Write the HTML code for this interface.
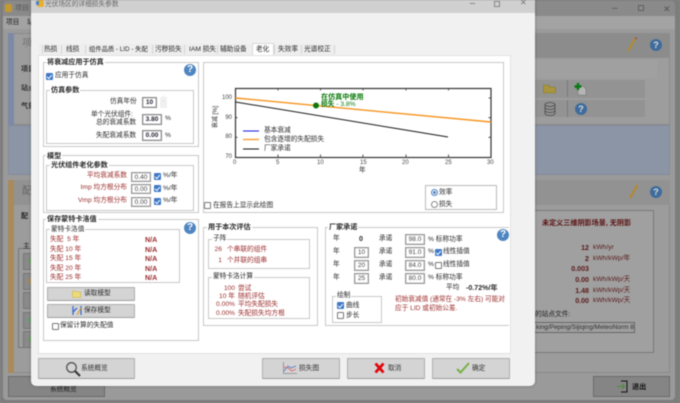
<!DOCTYPE html>
<html><head><meta charset="utf-8">
<style>
html,body{margin:0;padding:0;width:680px;height:403px;overflow:hidden;background:#8a8a8a}
body{font-family:"Liberation Sans","Noto Sans CJK SC",sans-serif;font-size:6.7px;color:#2a2a2a;position:relative}
#w{position:absolute;left:0;top:0;width:680px;height:403px;overflow:hidden;filter:blur(.5px)}
div,span,svg{position:absolute;box-sizing:border-box}
.t{white-space:nowrap;line-height:10px;margin-top:-5px}
.r{white-space:nowrap;line-height:10px;margin-top:-5px;text-align:right}
.b{font-weight:bold;font-size:7.1px}
.red{color:#9c2c2c}
.grp{border:1px solid #c8c8c8;background:transparent}
.lab{background:#fff;padding:0 1px;white-space:nowrap;line-height:10px;margin-top:-5px}
.in{background:#fff;border:1px solid #9a9a9a;box-shadow:inset 0 0 0 .5px #bbb;line-height:9px;font-size:6.5px;text-align:center;color:#444;white-space:nowrap}
.in.bd{font-weight:bold;color:#223;border-width:1.5px;border-color:#8a8a8a}
.cb{width:7px;height:7px;border:1px solid #777;background:#fff;border-radius:1px}
.cb.on{background:#3f78c8;border-color:#3f78c8}
.cb.on:after{content:"";position:absolute;left:1.2px;top:.2px;width:2.4px;height:3.6px;border:solid #fff;border-width:0 1px 1px 0;transform:rotate(40deg)}
.btn{background:#d4d4d4;border:1px solid #aeaeae;border-bottom:1.5px solid #9e9e9e;border-radius:1px}
.hp{width:12px;height:12px;border-radius:50%;background:#4f86c0;color:#fff;font:bold 9px/12px "Liberation Sans",sans-serif;text-align:center}
.dk{color:#5a1a1a}
.sep{width:1px;height:9px;top:45px;background:#d2d2d2}
</style></head><body><div id="w">

<!-- background parent window -->
<div style="left:0;top:0;width:680px;height:403px;background:#7d7d7d"></div>
<div style="left:3px;top:1px;width:672px;height:399px;background:#9a9a9a;border-radius:4px"></div>
<div style="left:3px;top:1px;width:672px;height:15px;background:#8a8a8a;border-radius:4px 4px 0 0"></div>
<div style="left:3px;top:16px;width:672px;height:13px;background:#a3a3a3"></div>
<div class="t" style="left:15px;top:9px;color:#555;font-size:7px">项目</div>
<div class="t" style="left:6px;top:23px;color:#222">项目</div>
<div class="t" style="left:27px;top:23px;color:#222">站</div>
<div style="left:5px;top:4px;width:7px;height:8px;background:#c49a30;border-radius:2px"></div>
<div style="left:8px;top:33px;width:662px;height:92px;background:#9d9d9d;border:1px solid #8a8a8a"></div>
<div style="left:8px;top:33px;width:6px;height:92px;background:#7c8aa8"></div>
<div class="t" style="left:22px;top:44px;font-size:10px;color:#666;font-family:'Liberation Serif','Noto Serif CJK SC',serif">项</div>
<div class="t b" style="left:21px;top:69px;color:#333">项目</div>
<div class="t b" style="left:21px;top:88px;color:#333">站点</div>
<div class="t b" style="left:21px;top:106px;color:#333">气象</div>
<div style="left:535px;top:33px;width:135px;height:25px;background:#8c8c8c"></div>
<div style="left:535px;top:60px;width:122px;height:18px;background:#a0a0a0"></div>
<div style="left:535px;top:80px;width:110px;height:18px;background:#939393"></div>
<div style="left:535px;top:100px;width:110px;height:17px;background:#939393"></div>
<div style="left:567px;top:80px;width:1px;height:17px;background:#777"></div>
<div style="left:567px;top:100px;width:1px;height:17px;background:#777"></div>
<div style="left:8px;top:125px;width:662px;height:50px;background:#8b95a6;border:1px solid #848c99"></div>
<div style="left:8px;top:180px;width:662px;height:193px;background:#9c9c9c;border:1px solid #8a8a8a"></div>
<div style="left:8px;top:180px;width:6px;height:193px;background:#a88a5c"></div>
<div style="left:14px;top:180px;width:656px;height:25px;background:#929292"></div>
<div class="t" style="left:22px;top:192px;font-size:10px;color:#666">配</div>
<div class="t b" style="left:21px;top:216px;color:#222">配</div>
<div style="left:18px;top:248px;width:20px;height:100px;border:1px solid #777"></div>
<div class="t" style="left:23px;top:247px;color:#222">主</div>
<div style="left:23px;top:253px;width:14px;height:17px;background:#8a8a8a;border:1px solid #777"></div>
<div style="left:23px;top:273px;width:14px;height:17px;background:#8a8a8a;border:1px solid #777"></div>
<div style="left:23px;top:292px;width:14px;height:17px;background:#8a8a8a;border:1px solid #777"></div>
<div style="left:23px;top:312px;width:14px;height:17px;background:#8a8a8a;border:1px solid #777"></div>
<div style="left:23px;top:331px;width:14px;height:17px;background:#8a8a8a;border:1px solid #777"></div>
<div style="left:28px;top:258px;width:6px;height:6px;border-radius:50%;background:#6c9a6c"></div>
<div style="left:28px;top:278px;width:6px;height:6px;border-radius:50%;background:#a88a5c"></div>
<div style="left:28px;top:317px;width:6px;height:6px;border-radius:50%;background:#6c9a6c"></div>
<div style="left:28px;top:336px;width:6px;height:6px;border-radius:50%;background:#6c9a6c"></div>
<div style="left:8px;top:376px;width:97px;height:21px;background:#858585;border:1px solid #6a6a6a"></div>
<div class="t" style="left:50px;top:390px;color:#222">系统概览</div>
<div style="left:593px;top:376px;width:77px;height:21px;background:#858585;border:1px solid #6a6a6a"></div>
<div class="t b" style="left:632px;top:387px;color:#111">退出</div>
<svg style="left:617px;top:380px" width="12" height="13" viewBox="0 0 12 13"><path d="M4 1h6v11H4" fill="none" stroke="#111" stroke-width="1"/><path d="M0 6.500h7M5 4l2.500 2.500L5 9" fill="none" stroke="#4a8a3a" stroke-width="1"/></svg>
<!-- right bg icons -->
<svg style="left:626px;top:37px" width="12" height="16" viewBox="0 0 12 16"><path d="M9.500 1L2 14" stroke="#b08a30" stroke-width="2.200"/><path d="M9.500 1l1 .6" stroke="#a04030" stroke-width="2"/></svg>
<div class="hp" style="left:650px;top:39px;background:#3f6c9c;color:#ddd">?</div>
<svg style="left:543px;top:84px" width="14" height="10" viewBox="0 0 14 10"><path d="M.5 9V1h5l1 2h6v6z" fill="#a8953e" stroke="#8a7a30" stroke-width=".6"/></svg>
<svg style="left:574px;top:82px" width="14" height="14" viewBox="0 0 14 14"><path d="M4 4h5l3 3v6H4z" fill="#b5b5b5" stroke="#777" stroke-width=".6"/><path d="M4 1v7M.5 4.500h7" stroke="#0a7a14" stroke-width="2.400"/></svg>
<svg style="left:544px;top:102px" width="12" height="14" viewBox="0 0 12 14"><g fill="none" stroke="#4a4a4a" stroke-width=".8"><ellipse cx="6" cy="2.500" rx="5" ry="2"/><path d="M1 2.500v9c0 1 2 2 5 2s5-1 5-2v-9M1 5.500c0 1 2 2 5 2s5-1 5-2M1 8.500c0 1 2 2 5 2s5-1 5-2"/></g></svg>
<div class="hp" style="left:575px;top:103px;background:#3f6c9c;color:#ddd">?</div>
<svg style="left:628px;top:184px" width="12" height="16" viewBox="0 0 12 16"><path d="M9.500 1L2 14" stroke="#b08a30" stroke-width="2.200"/></svg>
<div class="hp" style="left:650px;top:186px;background:#3f6c9c;color:#ddd">?</div>
<div style="left:535px;top:210px;width:119px;height:143px;background:#a0a0a0;border:1px solid #7a7a7a;border-left:0"></div>
<div class="t b" style="left:542px;top:223px;color:#5a1010">未定义三维阴影场景, 无阴影</div>
<div class="r b dk" style="left:560px;top:248px;width:29px">12</div><div class="t dk" style="left:593px;top:248px">kWh/yr</div>
<div class="r b dk" style="left:560px;top:259px;width:29px">2</div><div class="t dk" style="left:593px;top:259px">kWh/kWp/年</div>
<div class="r b dk" style="left:560px;top:269px;width:29px">0.003</div>
<div class="r b dk" style="left:560px;top:280px;width:29px">0.00</div><div class="t dk" style="left:593px;top:280px">kWh/kWp/天</div>
<div class="r b dk" style="left:560px;top:291px;width:29px">1.48</div><div class="t dk" style="left:593px;top:291px">kWh/kWp/天</div>
<div class="r b dk" style="left:560px;top:301px;width:29px">0.00</div><div class="t dk" style="left:593px;top:301px">kWh/kWp/天</div>
<div class="t" style="left:535px;top:315px;color:#222">的站点文件:</div>
<div style="left:530px;top:322px;width:105px;height:11px;border:1px solid #666;overflow:hidden;color:#333;line-height:9px;white-space:nowrap;font-size:6.500px;padding-left:5px">king/Peping/Sijiqing/MeteoNorm 8.1 :</div>
<div class="t" style="left:612px;top:9px;color:#555;font-size:10px">&#8211;</div>
<div style="left:638px;top:5px;width:6px;height:6px;border:1px solid #5f5f5f"></div>
<div class="t" style="left:663px;top:9px;color:#555;font-size:9px">&#10005;</div>

<!-- dialog -->
<div style="left:31px;top:0;width:504px;height:386px;background:#f1f1f1;border-radius:0 0 5px 5px;box-shadow:0 0 3px rgba(0,0,0,.25)"></div>
<div style="left:31px;top:0;width:504px;height:13px;background:#d0d0d0"></div>
<div style="left:37px;top:0;width:7px;height:7px;background:#e8b030;border-radius:2px"></div>
<div style="left:36px;top:1px;width:3px;height:4px;background:#4a86c8"></div>
<div class="t" style="left:45px;top:5px;color:#666">光伏场区的详细损失参数</div>
<div style="left:470px;top:3px;width:5px;height:1px;background:#888"></div>
<div style="left:494px;top:1px;width:6px;height:6px;border:1px solid #888"></div>
<div class="t" style="left:520px;top:3px;color:#777;font-size:8px">&#10005;</div>

<!-- tabs -->
<div style="left:39px;top:44px;width:296px;height:11px;background:#eee"></div>
<div class="sep" style="left:42px"></div><div class="sep" style="left:61px"></div><div class="sep" style="left:85px"></div><div class="sep" style="left:152px"></div><div class="sep" style="left:184px"></div><div class="sep" style="left:217px"></div><div class="sep" style="left:274px"></div><div class="sep" style="left:301px"></div><div class="sep" style="left:334px"></div>
<div style="left:252px;top:43px;width:22px;height:13px;background:#fff;border:1px solid #d8d8d8;border-bottom:0"></div>
<div class="t" style="left:44px;top:50px">热损</div>
<div class="t" style="left:66px;top:50px">线损</div>
<div class="t" style="left:89px;top:50px;font-size:6.300px">组件品质 - LID - 失配</div>
<div class="t" style="left:155px;top:50px">污秽损失</div>
<div class="t" style="left:189px;top:50px">IAM 损失</div>
<div class="t" style="left:220px;top:50px">辅助设备</div>
<div class="t" style="left:256px;top:50px">老化</div>
<div class="t" style="left:278px;top:50px">失效率</div>
<div class="t" style="left:304px;top:50px">光谱校正</div>

<!-- white panel -->
<div style="left:38px;top:55px;width:473px;height:299px;background:#fff;border:1px solid #e2e2e2"></div>

<!-- group 1 -->
<div class="grp" style="left:43px;top:62px;width:156px;height:85px"></div>
<div class="lab b" style="left:46px;top:62px">将衰减应用于仿真</div>
<div class="cb on" style="left:46px;top:73px"></div>
<div class="t" style="left:55px;top:76px">应用于仿真</div>
<div class="hp" style="left:184px;top:64px;font-size:10px">?</div>
<div class="grp" style="left:46px;top:90px;width:148px;height:54px"></div>
<div class="lab b" style="left:50px;top:90px">仿真参数</div>
<div class="t" style="left:110px;top:102px">仿真年份</div>
<div class="in bd" style="left:142px;top:97px;width:15px;height:11px">10</div>
<div style="left:160px;top:97px;width:7px;height:11px;background:#f0f0f0;color:#bbb;font-size:5px;line-height:5px;text-align:center">&#710;<br>&#711;</div>
<div class="t" style="left:91px;top:115px">单个光伏组件:</div>
<div class="t" style="left:96px;top:123px">总的衰减系数</div>
<div class="in bd" style="left:142px;top:114px;width:20px;height:11px">3.80</div>
<div class="t" style="left:165px;top:119px">%</div>
<div class="t" style="left:96px;top:136px">失配衰减系数</div>
<div class="in bd" style="left:142px;top:130px;width:20px;height:11px">0.00</div>
<div class="t" style="left:165px;top:136px">%</div>

<!-- group 2 -->
<div class="grp" style="left:43px;top:155px;width:156px;height:58px"></div>
<div class="lab b" style="left:46px;top:156px">模型</div>
<div class="grp" style="left:46px;top:165px;width:148px;height:46px"></div>
<div class="lab b" style="left:50px;top:165px">光伏组件老化参数</div>
<div class="r red" style="left:70px;top:176px;width:57px">平均衰减系数</div>
<div class="r red" style="left:70px;top:188px;width:57px">Imp 均方根分布</div>
<div class="r red" style="left:70px;top:201px;width:57px">Vmp 均方根分布</div>
<div class="in" style="left:131px;top:172px;width:20px;height:10px">0.40</div>
<div class="in" style="left:131px;top:184px;width:20px;height:10px">0.00</div>
<div class="in" style="left:131px;top:197px;width:20px;height:10px">0.00</div>
<div class="cb on" style="left:154px;top:173px"></div><div class="t" style="left:163px;top:176px">%/年</div>
<div class="cb on" style="left:154px;top:185px"></div><div class="t" style="left:163px;top:189px">%/年</div>
<div class="cb on" style="left:154px;top:198px"></div><div class="t" style="left:163px;top:201px">%/年</div>

<!-- group 3 -->
<div class="grp" style="left:43px;top:219px;width:156px;height:122px"></div>
<div class="lab b" style="left:46px;top:219px">保存蒙特卡洛值</div>
<div class="hp" style="left:184px;top:222px;font-size:10px">?</div>
<div class="grp" style="left:46px;top:229px;width:134px;height:54px"></div>
<div class="lab" style="left:50px;top:230px">蒙特卡洛值</div>
<div class="t red" style="left:50px;top:240px">失配&nbsp; 5 年</div><div class="t red b" style="left:145px;top:240px">N/A</div>
<div class="t red" style="left:50px;top:250px">失配 10 年</div><div class="t red b" style="left:145px;top:250px">N/A</div>
<div class="t red" style="left:50px;top:259px">失配 15 年</div><div class="t red b" style="left:145px;top:259px">N/A</div>
<div class="t red" style="left:50px;top:269px">失配 20 年</div><div class="t red b" style="left:145px;top:269px">N/A</div>
<div class="t red" style="left:50px;top:278px">失配 25 年</div><div class="t red b" style="left:145px;top:278px">N/A</div>
<div class="btn" style="left:47px;top:287px;width:88px;height:14px"></div>
<svg style="left:72px;top:290px" width="10" height="8" viewBox="0 0 10 8"><path d="M.5 7.500V1h3l1 1h4v5.500z" fill="#ecdb78" stroke="#c9b23e" stroke-width=".6"/></svg>
<div class="t" style="left:84px;top:294px">读取模型</div>
<div class="btn" style="left:47px;top:304px;width:88px;height:14px"></div>
<svg style="left:72px;top:306px" width="10" height="9" viewBox="0 0 10 9"><path d="M1 0v9M9 0v9M1 6l4-4" stroke="#3a6ad0" stroke-width="1.300" fill="none"/><path d="M5 9l4-7" stroke="#e09a30" stroke-width="1"/></svg>
<div class="t" style="left:84px;top:311px">保存模型</div>
<div class="cb" style="left:52px;top:323px"></div>
<div class="t" style="left:60px;top:326px">保留计算的失配值</div>

<!-- chart panel -->
<div class="grp" style="left:203px;top:62px;width:301px;height:151px"></div>
<svg style="left:203px;top:62px" width="301" height="151" viewBox="203 62 301 151">
 <rect x="235.500" y="88.500" width="255.500" height="69" fill="#fff" stroke="#333" stroke-width="1.200"/>
 <g stroke="#333" stroke-width=".8">
  <path d="M278 88v2.500M320.500 88v2.500M363 88v2.500M406 88v2.500M448.500 88v2.500M278 157v-2.500M320.500 157v-2.500M363 157v-2.500M406 157v-2.500M448.500 157v-2.500M235 98h2.500M235 117.700h2.500M235 137.300h2.500M491 98h-2.500M491 117.700h-2.500M491 137.300h-2.500"/>
 </g>
 <path d="M235.500 98L491 122" stroke="#f7941d" stroke-width="1.400"/>
 <path d="M235.500 102L448 137" stroke="#1a1a1a" stroke-width="1"/>
 <circle cx="316" cy="105.500" r="3" fill="#0a7a0a"/>
 <path d="M243 131h16" stroke="#1414e0" stroke-width="1"/>
 <path d="M243 139.500h16" stroke="#f7a030" stroke-width="1.400"/>
 <path d="M243 149h16" stroke="#111" stroke-width="1"/>
</svg>
<div class="t b" style="left:321px;top:97px;color:#0a7a0a">在仿真中使用</div>
<div class="t" style="left:321px;top:105px;color:#0a7a0a"><b>损失</b> - 3.8%</div>
<div class="t" style="left:264px;top:131px">基本衰减</div>
<div class="t" style="left:264px;top:140px">包含逐增的失配损失</div>
<div class="t" style="left:264px;top:149px">厂家承诺</div>
<div class="r" style="left:218px;top:98px;width:14px;color:#444;font-size:6px">100</div>
<div class="r" style="left:218px;top:118px;width:14px;color:#444;font-size:6px">90</div>
<div class="r" style="left:218px;top:137px;width:14px;color:#444;font-size:6px">80</div>
<div class="r" style="left:218px;top:157px;width:14px;color:#444;font-size:6px">70</div>
<div class="t" style="left:233px;top:163px;color:#444;font-size:6px">0</div>
<div class="t" style="left:276px;top:163px;color:#444;font-size:6px">5</div>
<div class="t" style="left:317px;top:163px;color:#444;font-size:6px">10</div>
<div class="t" style="left:360px;top:163px;color:#444;font-size:6px">15</div>
<div class="t" style="left:402px;top:163px;color:#444;font-size:6px">20</div>
<div class="t" style="left:445px;top:163px;color:#444;font-size:6px">25</div>
<div class="t" style="left:487px;top:163px;color:#444;font-size:6px">30</div>
<div class="t" style="left:359px;top:171px">年</div>
<div class="t" style="left:205px;top:117px;transform:rotate(-90deg);transform-origin:center;font-size:6px">衰减 [%]</div>
<div class="cb" style="left:204px;top:202px"></div>
<div class="t" style="left:213px;top:206px">在报告上显示此绘图</div>
<div style="left:425px;top:185px;width:72px;height:25px;border:1px solid #bbb"></div>
<div style="left:431px;top:189px;width:7px;height:7px;border-radius:50%;border:1px solid #4a80c0;background:#fff"></div>
<div style="left:433px;top:191px;width:3px;height:3px;border-radius:50%;background:#4a80c0"></div>
<div class="t" style="left:439px;top:193px">效率</div>
<div style="left:431px;top:201px;width:7px;height:7px;border-radius:50%;border:1px solid #888;background:#fff"></div>
<div class="t" style="left:439px;top:205px">损失</div>

<!-- 用于本次评估 -->
<div class="grp" style="left:203px;top:227px;width:115px;height:99px"></div>
<div class="lab b" style="left:207px;top:227px">用于本次评估</div>
<div class="grp" style="left:208px;top:239px;width:102px;height:30px"></div>
<div class="lab" style="left:212px;top:239px">子阵</div>
<div class="r red" style="left:210px;top:250px;width:12px">26</div><div class="t red" style="left:227px;top:250px">个串联的组件</div>
<div class="r red" style="left:210px;top:261px;width:12px">1</div><div class="t red" style="left:227px;top:261px">个并联的组串</div>
<div class="grp" style="left:208px;top:277px;width:102px;height:42px"></div>
<div class="lab" style="left:212px;top:277px">蒙特卡洛计算</div>
<div class="r red" style="left:212px;top:289px;width:23px">100</div><div class="t red" style="left:238px;top:289px">尝试</div>
<div class="r red" style="left:212px;top:297px;width:23px">10 年</div><div class="t red" style="left:238px;top:297px">随机评估</div>
<div class="r red" style="left:212px;top:305px;width:23px">0.00%</div><div class="t red" style="left:238px;top:305px">平均失配损失</div>
<div class="r red" style="left:212px;top:314px;width:23px">0.00%</div><div class="t red" style="left:238px;top:314px">失配损失均方根</div>

<!-- 厂家承诺 -->
<div style="left:325px;top:227px;width:184px;height:1px;background:#c8c8c8"></div>
<div style="left:325px;top:325px;width:184px;height:1px;background:#c8c8c8"></div>
<div style="left:325px;top:227px;width:1px;height:99px;background:#c8c8c8"></div>
<div class="lab b" style="left:328px;top:227px">厂家承诺</div>
<div class="hp" style="left:497px;top:229px;font-size:10px">?</div>
<div class="t" style="left:333px;top:239px">年</div><div class="t b" style="left:359px;top:239px">0</div><div class="t" style="left:379px;top:239px">承诺</div>
<div class="in" style="left:405px;top:234px;width:20px;height:11px">98.0</div><div class="t" style="left:428px;top:240px">% 标称功率</div>
<div class="t" style="left:333px;top:252px">年</div><div class="in" style="left:354px;top:247px;width:15px;height:11px">10</div><div class="t" style="left:379px;top:252px">承诺</div>
<div class="in" style="left:405px;top:247px;width:20px;height:11px">91.0</div><div class="t" style="left:428px;top:252px">%</div><div class="cb on" style="left:435px;top:249px"></div><div class="t" style="left:443px;top:252px">线性插值</div>
<div class="t" style="left:333px;top:265px">年</div><div class="in" style="left:354px;top:260px;width:15px;height:11px">20</div><div class="t" style="left:379px;top:265px">承诺</div>
<div class="in" style="left:405px;top:260px;width:20px;height:11px">84.0</div><div class="t" style="left:428px;top:265px">%</div><div class="cb" style="left:435px;top:262px"></div><div class="t" style="left:443px;top:265px">线性插值</div>
<div class="t" style="left:333px;top:278px">年</div><div class="in" style="left:354px;top:273px;width:15px;height:11px">25</div><div class="t" style="left:379px;top:278px">承诺</div>
<div class="in" style="left:405px;top:273px;width:20px;height:11px">80.0</div><div class="t" style="left:428px;top:278px">% 标称功率</div>
<div class="t" style="left:446px;top:288px">平均</div><div class="t b" style="left:466px;top:288px">-0.72%/年</div>
<div class="grp" style="left:332px;top:296px;width:50px;height:27px"></div>
<div class="lab" style="left:336px;top:296px">绘制</div>
<div class="cb on" style="left:337px;top:302px"></div><div class="t" style="left:346px;top:306px">曲线</div>
<div class="cb" style="left:337px;top:312px"></div><div class="t" style="left:346px;top:316px">步长</div>
<div class="t red" style="left:395px;top:300px;font-size:6.650px">初始衰减值 (通常在 -3% 左右) 可能对</div>
<div class="t red" style="left:395px;top:309px;font-size:6.650px">应于 LID 或初始公差.</div>

<!-- bottom buttons -->
<div class="btn" style="left:38px;top:358px;width:97px;height:21px"></div>
<svg style="left:65px;top:361px" width="16" height="16" viewBox="0 0 16 16"><circle cx="6.500" cy="6.500" r="4.800" fill="none" stroke="#555" stroke-width="1.300"/><path d="M10 10l5 5" stroke="#333" stroke-width="2"/></svg>
<div class="t" style="left:81px;top:369px;color:#333">系统概览</div>
<div class="btn" style="left:262px;top:358px;width:78px;height:21px"></div>
<svg style="left:283px;top:362px" width="14" height="13" viewBox="0 0 14 13"><path d="M.5 0v11.500H14" stroke="#888" stroke-width=".8" fill="none"/><path d="M1 9l4-5 3 2 5-2" stroke="#4a78c8" stroke-width=".8" fill="none"/><path d="M1 5l4 1 4 3 4-2" stroke="#e06060" stroke-width=".8" fill="none"/></svg>
<div class="t" style="left:299px;top:369px;color:#333">损失图</div>
<div class="btn" style="left:347px;top:358px;width:78px;height:21px"></div>
<svg style="left:374px;top:362px" width="11" height="12" viewBox="0 0 11 12"><path d="M1.500 1.500l8 9M9.500 1.500l-8 9" stroke="#e0060c" stroke-width="2.800"/></svg>
<div class="t" style="left:388px;top:369px;color:#333">取消</div>
<div class="btn" style="left:432px;top:358px;width:78px;height:21px"></div>
<svg style="left:456px;top:362px" width="14" height="12" viewBox="0 0 14 12"><path d="M1 7l3.500 3.500L13 1" fill="none" stroke="#78b048" stroke-width="2"/></svg>
<div class="t" style="left:472px;top:369px;color:#333">确定</div>

</div></body></html>
